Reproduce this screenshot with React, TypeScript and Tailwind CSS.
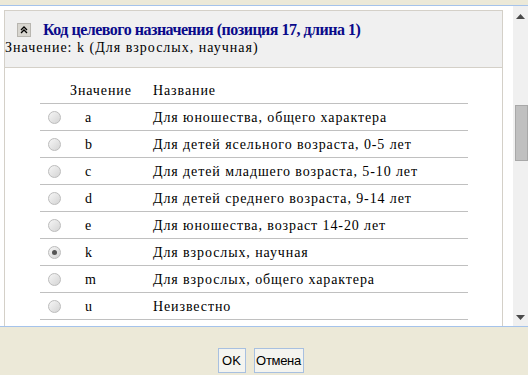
const rows = [
  { code: 'a', name: 'Для юношества, общего характера' },
  { code: 'b', name: 'Для детей ясельного возраста, 0-5 лет' },
  { code: 'c', name: 'Для детей младшего возраста, 5-10 лет' },
  { code: 'd', name: 'Для детей среднего возраста, 9-14 лет' },
  { code: 'e', name: 'Для юношества, возраст 14-20 лет' },
  { code: 'k', name: 'Для взрослых, научная' },
  { code: 'm', name: 'Для взрослых, общего характера' },
  { code: 'u', name: 'Неизвестно' },
];

function Radio({ checked }: { checked: boolean }) {
  return (
    <div className="w-[13px] h-[13px] rounded-full border border-[#bcbcbc] bg-gradient-to-br from-[#f6f6f6] to-[#d4d4d4] flex items-center justify-center">
      {checked && <div className="w-[5px] h-[5px] rounded-full bg-[#555]" />}
    </div>
  );
}

function CollapseIcon() {
  return (
    <div className="w-[14px] h-[14px] bg-[#d8d6d0] border border-[#b8b6b0] flex items-center justify-center">
      <svg width="8" height="8" viewBox="0 0 8 8">
        <path d="M1 4 L4 1 L7 4 M1 7 L4 4 L7 7" stroke="#000" strokeWidth="1.3" fill="none" />
      </svg>
    </div>
  );
}

function Scrollbar() {
  return (
    <div className="w-[15px] bg-[#f0f0f0] flex flex-col items-center">
      <svg width="9" height="5" viewBox="0 0 9 5" className="mt-[8px]">
        <path d="M0 5 L4.5 0 L9 5 Z" fill="#4a4a4a" />
      </svg>
      <div className="mt-[86px] ml-[2px] w-[13px] h-[56px] bg-[#c0c0c0] border border-[#a8a8a8]" />
      <div className="flex-1" />
      <svg width="9" height="5" viewBox="0 0 9 5" className="mb-[6px]">
        <path d="M0 0 L4.5 5 L9 0 Z" fill="#4a4a4a" />
      </svg>
    </div>
  );
}

export default function App() {
  return (
    <div className="w-[528px] h-[375px] bg-[#ece9d8] flex flex-col overflow-hidden font-['Liberation_Serif',serif]">
      <div className="h-[5px] shrink-0" />
      <div className="h-[322px] shrink-0 flex border-y border-[#a5c3eb] bg-white">
        <div className="flex-1 overflow-hidden pt-[4px] pl-[4px] pr-[10px]">
          <div className="h-[400px] border-x border-t border-[#d4d0c8]">
            <div className="bg-[#f0f0f0] border-b border-[#d4d0c8] h-[57px] pt-[11px]">
              <div className="flex items-center h-[15px] pl-[12px]">
                <CollapseIcon />
                <span className="ml-[12px] text-[16px] tracking-[-0.5px] font-bold text-[#0a0a8a] leading-none">
                  Код целевого назначения (позиция 17, длина 1)
                </span>
              </div>
              <div className="text-[14px] tracking-[1px] leading-[18px] text-black mt-[2px]">
                Значение: k (Для взрослых, научная)
              </div>
            </div>
            <div className="ml-[35px] mt-[9px] w-[428px] text-[14px] tracking-[0.9px] text-black">
              <div className="flex h-[27px] items-center border-b border-[#c0c0c0]">
                <div className="w-[25px]" />
                <div className="w-[88px] pl-[5px]">Значение</div>
                <div>Название</div>
              </div>
              {rows.map((r) => (
                <div key={r.code} className="flex h-[27px] items-center border-b border-[#c0c0c0]">
                  <div className="w-[25px] pl-[8px]">
                    <Radio checked={r.code === 'k'} />
                  </div>
                  <div className="w-[88px] pl-[20px]">{r.code}</div>
                  <div>{r.name}</div>
                </div>
              ))}
            </div>
          </div>
        </div>
        <Scrollbar />
      </div>
      <div className="flex-1 flex items-end justify-center gap-[8px] pb-[2px] pr-[7px] font-['Liberation_Sans',sans-serif] text-[13px]">
        <button className="h-[25px] w-[28px] bg-[#f4f4ef] border border-[#a8c0e0] text-black">OK</button>
        <button className="h-[25px] w-[50px] bg-[#f4f4ef] border border-[#a8c0e0] text-black tracking-[-0.3px]">Отмена</button>
      </div>
    </div>
  );
}
